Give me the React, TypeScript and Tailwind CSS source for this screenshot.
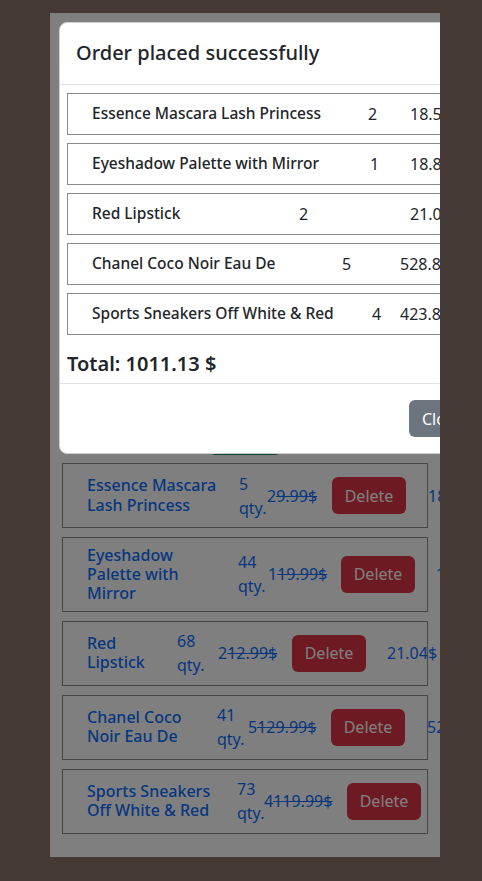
import React from "react";

const font = { fontFamily: '"Noto Sans", "Open Sans", sans-serif' };

type BgRow = {
  name: string[];
  qty: string;
  cart: string;
  price: string;
  total: string;
  nameW: string;
  qtyW: string;
  priceW: string;
  totalMl: string;
};

const bgRows: BgRow[] = [
  { name: ["Essence Mascara", "Lash Princess"], qty: "5", cart: "2", price: "9.99$", total: "18.53$", nameW: "w-[152px]", qtyW: "w-[28px]", priceW: "w-[65px]", totalMl: "ml-[22px]" },
  { name: ["Eyeshadow", "Palette with", "Mirror"], qty: "44", cart: "1", price: "19.99$", total: "18.82$", nameW: "w-[151px]", qtyW: "w-[30px]", priceW: "w-[73px]", totalMl: "ml-[21px]" },
  { name: ["Red", "Lipstick"], qty: "68", cart: "2", price: "12.99$", total: "21.04$", nameW: "w-[90px]", qtyW: "w-[41px]", priceW: "w-[74px]", totalMl: "ml-[21px]" },
  { name: ["Chanel Coco", "Noir Eau De"], qty: "41", cart: "5", price: "129.99$", total: "528.85$", nameW: "w-[130px]", qtyW: "w-[31px]", priceW: "w-[83px]", totalMl: "ml-[22px]" },
  { name: ["Sports Sneakers", "Off White & Red"], qty: "73", cart: "4", price: "119.99$", total: "423.89$", nameW: "w-[150px]", qtyW: "w-[27px]", priceW: "w-[83px]", totalMl: "ml-[22px]" },
];

type ModalRow = { name: string; qty: string; price: string; nameW: string; qtyW: string };

const modalRows: ModalRow[] = [
  { name: "Essence Mascara Lash Princess", qty: "2", price: "18.53", nameW: "w-[276px]", qtyW: "w-[42px]" },
  { name: "Eyeshadow Palette with Mirror", qty: "1", price: "18.82", nameW: "w-[278px]", qtyW: "w-[40px]" },
  { name: "Red Lipstick", qty: "2", price: "21.04", nameW: "w-[207px]", qtyW: "w-[111px]" },
  { name: "Chanel Coco Noir Eau De", qty: "5", price: "528.85", nameW: "w-[250px]", qtyW: "w-[58px]" },
  { name: "Sports Sneakers Off White & Red", qty: "4", price: "423.89", nameW: "w-[280px]", qtyW: "w-[28px]" },
];

export default function App() {
  return (
    <div className="min-h-screen w-full bg-[#453936] pt-[13px]" style={font}>
      <div className="relative ml-[50px] h-[844px] w-[390px] overflow-hidden bg-white">
        {/* page content under overlay */}
        <div className="flex h-[442px] items-end justify-center">
          <button className="h-[38px] w-[72px] rounded-md bg-[#198754] text-white">Order</button>
        </div>
        <div className="mt-[8px] flex flex-col gap-[9px] px-[12px]">
          {bgRows.map((r, i) => (
            <div
              key={i}
              className="flex w-[366px] items-center whitespace-nowrap border border-[#8f8f8f] py-[7.5px] pl-[24px] text-[16px] text-[#0d6efd]"
            >
              <div className={`${r.nameW} shrink-0 font-medium leading-[1.2]`}>
                {r.name.map((l, j) => (
                  <div key={j}>{l}</div>
                ))}
              </div>
              <div className={`${r.qtyW} shrink-0 leading-6`}>
                <div>{r.qty}</div>
                <div>qty.</div>
              </div>
              <div className={`${r.priceW} shrink-0`}>
                {r.cart}
                <span className="line-through">{r.price}</span>
              </div>
              <button className="h-[37px] w-[74px] shrink-0 rounded-md bg-[#dc3545] text-white">Delete</button>
              <div className={`${r.totalMl} shrink-0`}>{r.total}</div>
            </div>
          ))}
        </div>

        {/* overlay */}
        <div className="absolute inset-0 bg-black/50" />

        {/* modal */}
        <div className="absolute left-[9px] top-[9px] w-[440px] rounded-lg border border-[#d0d0d0] bg-white text-[#212529]">
          <div className="border-b border-[#dee2e6] px-[16px] pb-[16px] pt-[15px] text-[20px] font-medium leading-[30px]">
            Order placed successfully
          </div>
          <div className="px-[7px] pt-[8px]">
            <div className="flex flex-col gap-[8px]">
              {modalRows.map((r, i) => (
                <div
                  key={i}
                  className="flex h-[42px] items-center whitespace-nowrap border border-[#8a8a8a] pl-[24px] text-[16px]"
                >
                  <div className={`${r.nameW} shrink-0 text-[15.5px] font-medium`}>{r.name}</div>
                  <div className={`${r.qtyW} shrink-0`}>{r.qty}</div>
                  <div className="shrink-0">{r.price}</div>
                </div>
              ))}
            </div>
            <div className="mt-[14px] pb-[4px] text-[20px] font-semibold leading-[30px]">Total: 1011.13 $</div>
          </div>
          <div className="border-t border-[#dee2e6] pb-[16px] pl-[349px] pt-[16px]">
            <button className="h-[37px] rounded-md bg-[#6c757d] px-[13px] text-[16px] text-white">Close</button>
          </div>
        </div>
      </div>
    </div>
  );
}
